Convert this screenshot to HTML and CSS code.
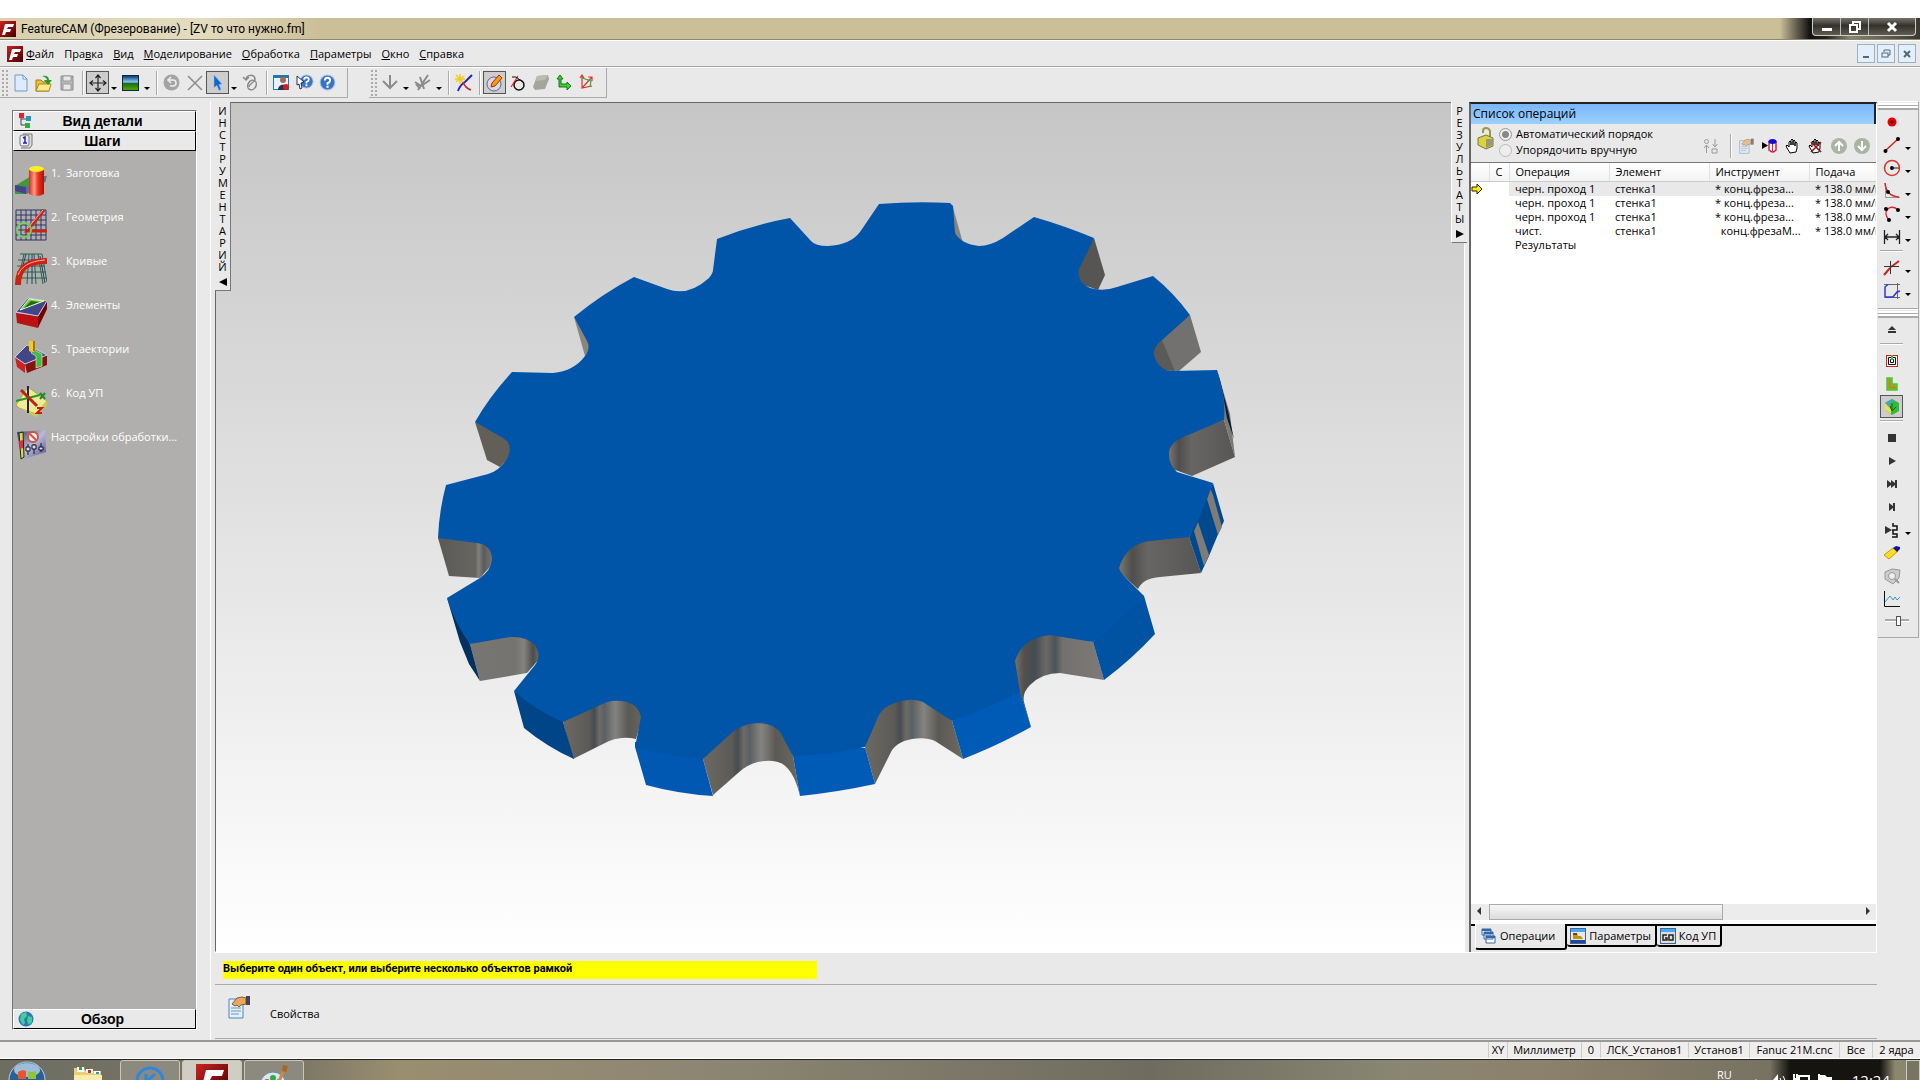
FILE: index.html
```html
<!DOCTYPE html>
<html lang="ru">
<head>
    <meta charset="UTF-8">
    <title>FeatureCAM (Фрезерование) - [ZV то что нужно.fm]</title>
    <link rel="stylesheet" href="styles.css">
</head>
<body>
    <!-- shared icons -->
    <svg class="defs" width="0" height="0">
        <defs>
            <linearGradient id="redBox" x1="0" y1="0" x2="1" y2="1"><stop offset="0" stop-color="#c22"/><stop offset="1" stop-color="#400"/></linearGradient>
            <linearGradient id="cyl"><stop offset="0" stop-color="#c31"/><stop offset=".35" stop-color="#f98"/><stop offset=".6" stop-color="#e32"/><stop offset="1" stop-color="#a10"/></linearGradient>
            <linearGradient id="sky" x1="0" y1="0" x2="0" y2="1"><stop offset="0" stop-color="#036"/><stop offset=".45" stop-color="#8cf"/><stop offset=".5" stop-color="#1a6a1a"/><stop offset="1" stop-color="#5a0"/></linearGradient>
            <linearGradient id="panel" x1="0" y1="0" x2="1" y2="1"><stop offset="0" stop-color="#336"/><stop offset=".5" stop-color="#bbd"/><stop offset="1" stop-color="#448"/></linearGradient>
            <symbol id="logo" viewBox="0 0 16 16">
                <rect width="16" height="16" fill="url(#redBox)"/>
                <path d="M5 3h9l-1 3H8l-1 2h4l-1 3H6l-1 3H2l2-7z" fill="#fff"/>
            </symbol>
            <symbol id="help" viewBox="0 0 16 16">
                <circle cx="8" cy="8" r="7" fill="#3b74c4" stroke="#a8c8ec"/>
                <path d="M5.500 6q0-2.500 2.500-2.500T10.500 6q0 1.500-2.500 2.500v1.500" fill="none" stroke="#fff" stroke-width="1.800"/>
                <rect x="7" y="11" width="2" height="2" fill="#fff"/>
            </symbol>
            <symbol id="hand" viewBox="0 0 16 16">
                <path d="M5 15 2 10 1 8l1-1 2 2V4l1-1 1 1v3-5l1-1 1 1v5-4l1-1 1 1v5-3l1-1 1 1v5l-1 4z" fill="#fff" stroke="#000"/>
            </symbol>
            <symbol id="props" viewBox="0 0 24 24">
                <path d="M1 4h14v19H1z" fill="#e4effa" stroke="#4a86c0"/>
                <path d="M3 13h10M3 16h10M3 19h8" stroke="#69b"/>
                <path d="M4 9l5-6 5-1 4 1v6l-5 1-2 2-2-2-2 1z" fill="#e8a860" stroke="#8a5a20"/>
                <path d="M18 1h4v9h-4z" fill="#445"/>
            </symbol>
        </defs>
    </svg>

    <header class="titlebar">
        <svg width="16" height="16"><use href="#logo"/></svg>
        <h1>FeatureCAM (Фрезерование) - [ZV то что нужно.fm]</h1>
        <div class="window-buttons">
            <button aria-label="Свернуть"><svg width="12" height="12"><rect x="1" y="7" width="10" height="3" fill="#fff"/></svg></button>
            <button aria-label="Восстановить"><svg width="12" height="12" fill="none" stroke="#fff" stroke-width="2"><path d="M4 3V1h7v7H9"/><rect x="1" y="4" width="7" height="7"/></svg></button>
            <button class="wide" aria-label="Закрыть"><svg width="12" height="12" stroke="#fff" stroke-width="3"><path d="M2 2l8 8M10 2l-8 8"/></svg></button>
        </div>
    </header>

    <nav class="menubar">
        <svg width="16" height="16"><use href="#logo"/></svg>
        <a href="#"><u>Ф</u>айл</a>
        <a href="#">Пра<u>в</u>ка</a>
        <a href="#"><u>В</u>ид</a>
        <a href="#"><u>М</u>оделирование</a>
        <a href="#"><u>О</u>бработка</a>
        <a href="#"><u>П</u>араметры</a>
        <a href="#"><u>О</u>кно</a>
        <a href="#"><u>С</u>правка</a>
        <div class="mdi-buttons">
            <button aria-label="Свернуть окно"><svg width="12" height="12"><rect x="3" y="8" width="6" height="2" fill="#567"/></svg></button>
            <button aria-label="Восстановить окно"><svg width="12" height="12" fill="none" stroke="#567"><path d="M4 4V2h6v5H8"/><rect x="2" y="5" width="6" height="4"/></svg></button>
            <button aria-label="Закрыть окно"><svg width="12" height="12" stroke="#567" stroke-width="2"><path d="M3 3l6 6M9 3l-6 6"/></svg></button>
        </div>
    </nav>

    <div class="toolbars">
        <div class="toolbar">
            <span class="grip"></span>
            <button class="tool" aria-label="Создать"><svg width="16" height="18"><path d="M2 1h8l4 4v12H2z" fill="#dcecfc" stroke="#6a9ad0"/><path d="M10 1v4h4z" fill="#fff" stroke="#6a9ad0"/></svg></button>
            <button class="tool" aria-label="Открыть"><svg width="18" height="18"><path d="M1 6h5l2 2h6v9H1z" fill="#e8c040" stroke="#a07810"/><path d="M1 17l3-7h12l-2 7z" fill="#fce98c" stroke="#b08a20"/><path d="M7 2c5-1 7 1 7 4h3l-4 5-4-5h3c0-2-2-3-5-4z" fill="#2a9a2a"/></svg></button>
            <button class="tool" aria-label="Сохранить"><svg width="16" height="18"><path d="M2 2h12v14H2z" fill="#b8b8b8" stroke="#8c8c8c"/><path d="M4 2h8v5H4zM4 10h8v6H4z" fill="#e8e8e8" stroke="#999"/></svg></button>
            <span class="sep"></span>
            <button class="tool pressed" aria-label="Панорама"><svg width="18" height="18" fill="none" stroke="#222"><path d="M9 1v16M1 9h16M6.500 4L9 1l2.500 3M6.500 14L9 17l2.500-3M4 6.500L1 9l3 2.500M14 6.500L17 9l-3 2.500" stroke-width="1.200"/></svg></button>
            <button class="drop" aria-label="Меню вида"></button>
            <button class="tool" aria-label="Закраска"><svg width="17" height="16"><rect x=".5" y=".5" width="16" height="15" fill="url(#sky)" stroke="#124"/></svg></button>
            <button class="drop" aria-label="Меню закраски"></button>
            <span class="sep"></span>
            <button class="tool" aria-label="Отмена"><svg width="17" height="17"><circle cx="8.500" cy="8.500" r="8" fill="#a4a4a4"/><path d="M6 6h4a3 3 0 0 1 0 6H7M8 3L5 6l3 3" fill="none" stroke="#eee" stroke-width="1.500"/></svg></button>
            <button class="tool" aria-label="Удалить"><svg width="16" height="16" stroke="#8c8c8c" stroke-width="1.500"><path d="M1 1l14 14M15 1L1 15"/></svg></button>
            <button class="tool pressed" aria-label="Выбор"><svg width="14" height="17"><path d="M3 1l8 9-3 .5 2 5-2 1-2-5-3 2z" fill="#16c" stroke="#8bf" stroke-width=".6"/></svg></button>
            <button class="drop" aria-label="Меню выбора"></button>
            <button class="tool" aria-label="Спираль"><svg width="18" height="18" fill="none" stroke="#888" stroke-width="1.500"><path d="M1 3l3 3 3-3M4 6C4 0 13 0 13 5c0 4-6 4-6 8"/><ellipse cx="10" cy="11" rx="4" ry="5" transform="rotate(30 10 11)"/></svg></button>
            <span class="sep"></span>
            <button class="tool" aria-label="Помощник"><svg width="17" height="17"><rect x=".5" y="1.500" width="15" height="14" fill="#e8f2fc" stroke="#27b"/><rect x="1" y="1" width="15" height="3" fill="#27a"/><circle cx="10" cy="6" r="3" fill="#a65"/><path d="M5 16c0-7 10-7 10 0z" fill="#235"/><circle cx="13" cy="13" r="3" fill="#c22"/></svg></button>
            <button class="tool" aria-label="Что это"><svg width="18" height="17"><use href="#help" x="3" y="0" width="15" height="15"/><path d="M1 2l7 6-3 1 1 5-2 1-1-5-2 1z" fill="#fff" stroke="#235"/></svg></button>
            <button class="tool" aria-label="Справка"><svg width="17" height="17"><use href="#help"/></svg></button>
        </div>
        <div class="toolbar">
            <span class="grip"></span>
            <button class="tool" aria-label="Ось"><svg width="18" height="16" fill="none" stroke="#8c8c8c" stroke-width="2"><path d="M9 0v13M2 6l7 7 7-7"/></svg></button>
            <button class="drop" aria-label="Меню осей"></button>
            <button class="tool" aria-label="Плоскость"><svg width="18" height="17" fill="none" stroke="#8c8c8c" stroke-width="2"><path d="M14 1L4 16M6 3l4 12M1 8l6 4 9-6M2 10l4 5"/></svg></button>
            <button class="drop" aria-label="Меню плоскостей"></button>
            <span class="sep"></span>
            <button class="tool" aria-label="Мастер кривой"><svg width="18" height="18" fill="none"><path d="M1 1l8 8M1 8l8-6M5 0v10M0 5h10" stroke="#ec2" stroke-width="1.500"/><path d="M17 1L10 8Q5 11 3 17" stroke="#22c" stroke-width="2"/><path d="M8 8q2 6 8 8" stroke="#c22" stroke-width="1.500"/></svg></button>
            <span class="sep"></span>
            <button class="tool pressed" aria-label="Элемент"><svg width="18" height="18"><circle cx="8" cy="10" r="7" fill="#d8d8e8" stroke="#668"/><path d="M5 13l1-4 7-8 3 3-7 8z" fill="#f90" stroke="#932"/></svg></button>
            <button class="tool" aria-label="Окружность"><svg width="16" height="18" fill="none"><circle cx="9" cy="11" r="5" stroke="#111" stroke-width="1.500"/><path d="M1 13L8 2" stroke="#e22" stroke-width="1.200"/><path d="M2 3h4l7 5" stroke="#111"/></svg></button>
            <button class="tool" aria-label="Тело"><svg width="18" height="18"><path d="M5 2l11-1 1 4-4 10-10 1-2-3z" fill="#a3a69c"/><path d="M5 2l11-1-3 5-9 1z" fill="#b9bcb2"/></svg></button>
            <button class="tool" aria-label="Переместить"><svg width="16" height="17"><path d="M4 1l3 4H5v5h6V8l4 4-4 4v-3H3V5H1z" fill="#4c3" stroke="#171"/></svg></button>
            <button class="tool" aria-label="Оси XYZ"><svg width="16" height="17" fill="none" stroke="#d33" stroke-width="1.200"><path d="M3 2v12l10-2M1 4l2-3 2 3M3 14L13 3M9 3h4v4"/><path d="M3 4l9 3-1 6" stroke="#3a3"/></svg></button>
        </div>
    </div>

    <main class="workspace">
        <aside class="steps">
            <div class="steps-box">
                <button class="steps-head">
                    <svg width="16" height="16"><path d="M3 4v8h5M3 6h6" fill="none" stroke="#444"/><rect x="1" y="0" width="5" height="5" fill="#d23"/><rect x="8" y="3" width="5" height="5" fill="#29b"/><rect x="7" y="10" width="5" height="5" fill="#3a4"/></svg>
                    <span>Вид детали</span>
                </button>
                <button class="steps-head">
                    <svg width="16" height="16"><path d="M5 1h9v11l-2 3H3" fill="#ddd" stroke="#777"/><rect x="2" y="2" width="9" height="11" rx="2" fill="#eef" stroke="#777"/><path d="M5 5l2-1v6M5 10h4" fill="none" stroke="#22c" stroke-width="1.500"/></svg>
                    <span>Шаги</span>
                </button>
                <ul class="step-list">
                    <li><a href="#">
                        <svg width="32" height="32"><path d="M0 21l16-10h16l-2 6-18 12H0z" fill="#3c9a3c"/><path d="M0 20l11 2v7L0 26z" fill="#448"/><path d="M11 22l20-11v5L11 29z" fill="#66a"/><path d="M14 4h15v25q-7 4-15 0z" fill="url(#cyl)"/><ellipse cx="21.500" cy="4" rx="7.500" ry="3" fill="#fe2"/></svg>
                        <span>1.&nbsp; Заготовка</span></a></li>
                    <li><a href="#">
                        <svg width="32" height="32" fill="none"><path d="M1 1h30v30H1zM6 1v30M11 1v30M16 1v30M21 1v30M26 1v30M1 6h30M1 11h30M1 16h30M1 21h30M1 26h30" stroke="#336"/><path d="M29 1L12 22h20" stroke="#c21" stroke-width="3"/><path d="M28 1L12 20" stroke="#faa"/><circle cx="9" cy="21" r="7" stroke="#7c6" stroke-width="2"/></svg>
                        <span>2.&nbsp; Геометрия</span></a></li>
                    <li><a href="#">
                        <svg width="32" height="32" fill="none"><path d="M5 1h22M3 7h26M2 13h28M2 19h29M1 25h31M9 1L3 28M14 1l-2 30M19 1l2 30M23 1l5 30M27 1l5 28" stroke="#264"/><path d="M11 1L6 20M17 1v30M25 3l5 27" stroke="#338"/><path d="M3 32C3 15 12 8 32 8" stroke="#c21" stroke-width="6"/><path d="M3 22C6 14 14 8 30 7" stroke="#faa"/></svg>
                        <span>3.&nbsp; Кривые</span></a></li>
                    <li><a href="#">
                        <svg width="32" height="32"><path d="M1 16l22 3v12L2 26z" fill="#b11"/><path d="M23 19l9-16v9l-9 19z" fill="#700"/><path d="M1 15L13 1l19 3-9 15z" fill="#448" stroke="#ccd"/><path d="M5 13l9-11 15 2z" fill="#7c3" stroke="#dfc"/><path d="M9 11l7-7 8 1z" fill="#262"/></svg>
                        <span>4.&nbsp; Элементы</span></a></li>
                    <li><a href="#">
                        <svg width="32" height="32"><path d="M0 16l10 7v9L2 26z" fill="#c22"/><path d="M10 23l22-9v10l-20 8z" fill="#811"/><path d="M0 16L12 4l20 10-22 9z" fill="#448" stroke="#ccd"/><path d="M19 9l8 4v12l-6 2V15l-5-3z" fill="#4b4" stroke="#dfd" stroke-width=".6"/><path d="M14 0h6v10q-3 2-6 0z" fill="#ec2"/><path d="M18 0h2v10h-2z" fill="#a70"/></svg>
                        <span>5.&nbsp; Траектории</span></a></li>
                    <li><a href="#">
                        <svg width="32" height="32" fill="none"><path d="M1 20L13 2l19 14-11 13L4 23z" fill="#f3eb94" stroke="#aa4"/><path d="M4 23l17 6 11-13v4L21 32z" fill="#cc5"/><path d="M13 1v27" stroke="#225" stroke-width="2"/><path d="M1 16l24-6" stroke="#292" stroke-width="2"/><path d="M6 5l16 16" stroke="#b21" stroke-width="3"/><path d="M25 8l5 6M30 8l-5 6" stroke="#283" stroke-width="2"/><path d="M22 23h5l-5 5h5" stroke="#b21" stroke-width="2"/></svg>
                        <span>6.&nbsp; Код УП</span></a></li>
                    <li><a href="#">
                        <svg width="32" height="32" fill="none"><path d="M2 3l28-2 1 22L6 31z" fill="url(#panel)"/><path d="M4 4l4-1 1 25-3 2z" fill="#dd3" stroke="#222"/><path d="M4 12l4-1v8l-3 1z" fill="#d33"/><circle cx="18" cy="8" r="5" fill="#eee" stroke="#c54" stroke-width="2"/><path d="M15 5l6 6" stroke="#c54" stroke-width="2"/><path d="M13 15v11M19 15v10M26 14v9" stroke="#112"/><path d="M11 18h4v4h-4zM17 16h4v4h-4zM24 18h4v3h-4z" fill="#dde" stroke="#112"/></svg>
                        <span>Настройки обработки...</span></a></li>
                </ul>
                <button class="steps-head last">
                    <svg width="16" height="16"><circle cx="8" cy="8" r="7.500" fill="#2a7ab8"/><path d="M3 3l5-2 1 4-3 3 1 4-2 2-3-5zM10 5l4 1v5l-3 3-2-4z" fill="#4c9"/></svg>
                    <span>Обзор</span>
                </button>
            </div>
        </aside>

        <div class="center">
            <div class="upper">
                <section class="viewport">
                    <svg class="part">
                        <defs>
                            <linearGradient id="g1"><stop offset="0" stop-color="#5a5954"/><stop offset=".5" stop-color="#646360"/><stop offset=".62" stop-color="#64645f"/><stop offset=".68" stop-color="#82807c"/><stop offset=".76" stop-color="#5a5c5c"/><stop offset="1" stop-color="#8b857c"/></linearGradient>
                            <linearGradient id="g2"><stop offset="0" stop-color="#777672"/><stop offset=".6" stop-color="#747370"/><stop offset=".72" stop-color="#83827e"/><stop offset=".84" stop-color="#4c4d4c"/><stop offset="1" stop-color="#8b867d"/></linearGradient>
                            <linearGradient id="g3"><stop offset="0" stop-color="#6c6963"/><stop offset=".3" stop-color="#5b5a57"/><stop offset=".36" stop-color="#464c51"/><stop offset=".42" stop-color="#6d6b67"/><stop offset=".48" stop-color="#596065"/><stop offset=".6" stop-color="#85837f"/><stop offset=".75" stop-color="#5a5955"/><stop offset="1" stop-color="#6e695e"/></linearGradient>
                            <linearGradient id="g4"><stop offset="0" stop-color="#827c74"/><stop offset=".13" stop-color="#53504c"/><stop offset=".25" stop-color="#444d52"/><stop offset=".37" stop-color="#6b6966"/><stop offset=".47" stop-color="#4a5459"/><stop offset=".55" stop-color="#73716d"/><stop offset="1" stop-color="#7d7a77"/></linearGradient>
                            <linearGradient id="g5"><stop offset="0" stop-color="#8a837a"/><stop offset=".2" stop-color="#4f4e4c"/><stop offset=".38" stop-color="#686664"/><stop offset="1" stop-color="#565655"/></linearGradient>
                        </defs>
                        <g transform="translate(-216 -103)">
                        <!-- notch walls, they run a little under the top face -->
                        <path d="M574 317l18 31-7 8z" fill="#8a867c"/>
                        <path d="M475 422l28 10 12 13v7l-15 15-13-7z" fill="#625f58"/>
                        <path d="M438 538H477L498 548 496 560 480 578 449 576z" fill="url(#g1)"/>
                        <path d="M470 644L510 630 545 640 541 657 527 673 480 681z" fill="url(#g2)"/>
                        <path d="M563 722L600 690H650L636 739q-17-4-33 5l-30 15z" fill="url(#g3)"/>
                        <path d="M703 759L725 725 755 715 782 722 793 756l7 40q-8-34-27-35-20-2-35 12l-25 22z" fill="url(#g3)"/>
                        <path d="M865 747L872 708 890 692 927 692 952 721l11 38-28-18q-9-4-23-2-17 3-22 15l-15 30z" fill="url(#g3)"/>
                        <path d="M1012 661L1018 645 1035 630H1050L1093 642l11 38-44-7q-18 0-30 12-8 8-6 17l7 25-11-34z" fill="url(#g4)"/>
                        <path d="M1115 568L1125 548 1150 535 1189 537l12 36-41 4q-17 1-22 12z" fill="url(#g5)"/>
                        <path d="M1165 455L1175 438 1224 420l11 37-43 19-22-8z" fill="url(#g5)"/>
                        <path d="M1150 350L1160 335 1190 315l11 37-22 19-18-1z" fill="#72716f"/>
                        <path d="M1150 350L1161 338l14 33-14-1z" fill="#5c5a57"/>
                        <path d="M1094 238l11 37-7 15-23-8v-14z" fill="#565553"/>
                        <path d="M952 204l11 39-9-3z" fill="#87847e"/>
                        <!-- outer faces -->
                        <path d="M1217 370l13 44 5 43-11-37z" fill="#7c7972"/>
                        <path d="M1217 370l11 41 6 28-7-21-4-23z" fill="#031c33"/>
                        <path d="M1213 483l11 38-5 11-10 24-8 17-12-36z" fill="#00498f"/>
                        <path d="M1210 488l3 7 9 32-4 8-11-36zM1198 522l11 33-5 11-10-35z" fill="#7f7b77"/>
                        <path d="M447 598l13 23 10 23 10 37-11-17-9-22z" fill="#00315f"/>
                        <path d="M514 691L563 715V722l11 37q-27-12-50-31z" fill="#004587"/>
                        <path d="M635 747V742H703V759l10 37q-34-2-67-11z" fill="#0058b2"/>
                        <path d="M793 756V748H865V747l10 37q-37 8-75 12z" fill="#005bb7"/>
                        <path d="M952 721L1016 680 1020 692l11 35q-32 18-68 32z" fill="#005bb7"/>
                        <path d="M1093 642L1135 592 1144 596l11 38q-23 25-51 46z" fill="#0052a3"/>
                        <!-- top face -->
                        <path fill="#0055a8" d="M446 485L488 474Q499 471 507 459Q512 450 508 442L503 438L475 422Q489 397 512 372L553 373Q574 371 585 356Q591 348 587 341L574 317Q602 294 634 277L667 289Q688 297 709 278Q713 273 713 270L717 239Q752 225 790 218L811 241Q815 246 828 246Q850 245 860 232L879 204Q915 201 950 203L953 206L955 233Q961 244 979 246Q990 246 1003 238L1034 217Q1065 226 1094 238L1079 269Q1076 282 1090 288Q1103 292 1117 287L1153 276Q1174 293 1190 315L1161 341Q1151 349 1155 358Q1160 371 1173 371L1217 370Q1226 396 1224 420L1183 437Q1168 444 1169 455Q1169 465 1177 472L1213 483Q1203 512 1189 537L1150 541Q1126 544 1119 568Q1120 572 1125 577L1144 596Q1121 621 1093 642L1050 635Q1022 638 1015 661L1020 692Q988 708 952 721L923 702Q908 696 888 706Q881 710 878 717L865 747Q830 755 793 756L780 732Q773 723 757 723Q739 724 727 737L703 759Q669 756 635 747L641 717Q638 703 622 701Q614 700 607 702L563 722Q535 710 514 691L535 665Q542 656 535 645Q526 636 510 637L470 644Q455 624 447 598L480 578Q491 570 492 560Q492 545 477 543L438 538Q439 511 446 485Z"/>
                        </g>
                    </svg>
                    <button class="side-tab tab-left">
                        <span>ИНСТРУМЕНТАРИЙ</span>
                        <svg width="8" height="8"><path d="M8 0v8L0 4z"/></svg>
                    </button>
                    <button class="side-tab tab-right">
                        <span>РЕЗУЛЬТАТЫ</span>
                        <svg width="8" height="8"><path d="M0 0v8l8-4z"/></svg>
                    </button>
                </section>

                <section class="results">
                    <h2>Список операций</h2>
                    <div class="order">
                        <svg width="18" height="24"><path d="M7 7V5q0-3 3-3t4 3v8" fill="none" stroke="#994" stroke-width="2"/><path d="M2 12l8-3 7 3v8l-7 3-8-4z" fill="#dcd23a" stroke="#774"/><path d="M10 13v9l7-3v-6z" fill="#997"/></svg>
                        <div class="order-radios">
                            <label><input type="radio" name="order" checked> Автоматический порядок</label>
                            <label><input type="radio" name="order"> Упорядочить вручную</label>
                        </div>
                        <div class="order-tools">
                            <button aria-label="Сортировка"><svg width="16" height="16" fill="none" stroke="#999"><circle cx="3.500" cy="3.500" r="2"/><path d="M3.500 15V8M1 10l2.500-3L6 10M12 1v7M9.500 6l2.500 3 2.500-3M9 11h5v4H9z"/></svg></button>
                            <span class="sep"></span>
                            <button aria-label="Свойства операции"><svg width="16" height="16" opacity=".65"><use href="#props"/></svg></button>
                            <button aria-label="Инструмент"><svg width="16" height="16"><path d="M0 4v7l6-3.500z"/><path d="M7 3v9q4 4 7 0V3" fill="#fff" stroke="#d24" stroke-width="1.500"/><path d="M10.500 5v9" stroke="#d24"/><ellipse cx="10.500" cy="3.500" rx="4" ry="2.500" fill="#11c"/></svg></button>
                            <button aria-label="Стоп"><svg width="16" height="16"><use href="#hand"/></svg></button>
                            <button aria-label="Убрать стоп"><svg width="16" height="16"><use href="#hand"/><path d="M3 4l10 10M13 4L3 14" stroke="#911" stroke-width="1.500"/></svg></button>
                            <button aria-label="Вверх"><svg width="16" height="16"><circle cx="8" cy="8" r="8" fill="#a9b4a1"/><path d="M8 13V4M4 8l4-4 4 4" fill="none" stroke="#fff" stroke-width="2"/></svg></button>
                            <button aria-label="Вниз"><svg width="16" height="16"><circle cx="8" cy="8" r="8" fill="#a9b4a1"/><path d="M8 3v9M4 8l4 4 4-4" fill="none" stroke="#fff" stroke-width="2"/></svg></button>
                        </div>
                    </div>
                    <div class="table-wrap">
                        <table>
                            <colgroup><col class="c-mark"><col class="c-c"><col class="c-text"><col class="c-text"><col class="c-text"><col></colgroup>
                            <thead>
                                <tr><th></th><th>С</th><th>Операция</th><th>Элемент</th><th>Инструмент</th><th>Подача</th></tr>
                            </thead>
                            <tbody>
                                <tr class="current"><td><svg width="12" height="12"><path d="M1 4h5V1l5 5-5 5V8H1z" fill="#fe0" stroke="#220"/></svg></td><td></td><td>черн. проход 1</td><td>стенка1</td><td>* конц.фреза...</td><td>* 138.0 мм/мин</td></tr>
                                <tr><td></td><td></td><td>черн. проход 1</td><td>стенка1</td><td>* конц.фреза...</td><td>* 138.0 мм/мин</td></tr>
                                <tr><td></td><td></td><td>черн. проход 1</td><td>стенка1</td><td>* конц.фреза...</td><td>* 138.0 мм/мин</td></tr>
                                <tr><td></td><td></td><td>чист.</td><td>стенка1</td><td>&nbsp; конц.фрезаМ...</td><td>* 138.0 мм/мин</td></tr>
                                <tr><td></td><td></td><td>Результаты</td><td></td><td></td><td></td></tr>
                            </tbody>
                        </table>
                    </div>
                    <div class="scrollbar">
                        <svg width="18" height="14"><path d="M10 3v8L6 7z" fill="#333"/></svg>
                        <div class="thumb"></div>
                        <svg width="18" height="14"><path d="M8 3v8l4-4z" fill="#333"/></svg>
                    </div>
                    <div class="tabs">
                        <button class="active"><svg width="16" height="16" fill="#fff" stroke="#36a"><path d="M1 1h9v6H1zM3 4h9v7H3zM5 8h9v7H5z"/><path d="M1 2h9M3 5h9M5 9h9" stroke-width="2"/></svg>Операции</button>
                        <button><svg width="16" height="16"><rect x=".5" y=".5" width="15" height="15" fill="#e8e8e8" stroke="#468"/><path d="M1 1h14v3H1z" fill="#4af"/><path d="M3 5h4l1 3h3l2 3H3z" fill="#b90"/><path d="M3 5h4v2H3z" fill="#a22"/><path d="M1 12h14v3H1z" fill="#24a"/></svg>Параметры</button>
                        <button><svg width="16" height="16" fill="none"><rect x=".5" y=".5" width="15" height="15" fill="#ddd" stroke="#468"/><path d="M1 1h14v3H1z" fill="#4af"/><path d="M7 7H3v5h4v-2H5M9 7h4v5H9z" stroke="#222" stroke-width="1.500"/></svg>Код УП</button>
                    </div>
                </section>
            </div>

            <div class="prompt"><p>Выберите один объект, или выберите несколько объектов рамкой</p></div>
            <div class="properties">
                <svg width="24" height="24"><use href="#props"/></svg>
                <span>Свойства</span>
            </div>
        </div>

        <aside class="right-tools">
            <div class="vbar">
                <span class="hgrip"></span>
                <div class="vrow"><button class="tool" aria-label="Точка"><svg width="18" height="18"><circle cx="9" cy="9" r="4.500" fill="#e00"/><path d="M9 7v4M7 9h4" stroke="#400"/></svg></button></div>
                <div class="vrow"><button class="tool" aria-label="Линия"><svg width="18" height="18"><path d="M2 15L15 3" stroke="#d22" stroke-width="1.500"/><circle cx="2.500" cy="15" r="2"/><circle cx="15" cy="3" r="2"/></svg></button><button class="drop" aria-label="Меню линий"></button></div>
                <div class="vrow"><button class="tool" aria-label="Круг"><svg width="18" height="18"><circle cx="9" cy="9" r="7.500" fill="none" stroke="#d33" stroke-width="1.500"/><circle cx="9" cy="9" r="2"/><path d="M9 9h7" stroke="#222"/></svg></button><button class="drop" aria-label="Меню кругов"></button></div>
                <div class="vrow"><button class="tool" aria-label="Скругление"><svg width="18" height="18" fill="none"><path d="M2.500 1v14.500H17" stroke="#999"/><path d="M2 1q1 13 14 14" stroke="#d22" stroke-width="1.500"/><circle cx="5" cy="10" r="2" fill="#000"/></svg></button><button class="drop" aria-label="Меню скруглений"></button></div>
                <div class="vrow"><button class="tool" aria-label="Дуга"><svg width="18" height="18"><path d="M6 15C-2 6 8-2 15 5" fill="none" stroke="#d22" stroke-width="1.500"/><circle cx="6" cy="15" r="2"/><circle cx="3" cy="4" r="2"/><circle cx="15" cy="5" r="2"/></svg></button><button class="drop" aria-label="Меню дуг"></button></div>
                <div class="vrow"><button class="tool" aria-label="Размер"><svg width="18" height="18" fill="none" stroke="#222"><path d="M1.500 2v14M16.500 2v14M2 9h14M5 6L2 9l3 3M13 6l3 3-3 3" stroke-width="1.300"/></svg></button><button class="drop" aria-label="Меню размеров"></button></div>
                <span class="hsep"></span>
                <div class="vrow"><button class="tool" aria-label="Обрезка"><svg width="18" height="18" fill="none"><path d="M1 16L7 9M8 8l8-6" stroke="#c22" stroke-width="2"/><path d="M7.500 2v13M1 7.500h15" stroke="#333"/></svg></button><button class="drop" aria-label="Меню обрезки"></button></div>
                <div class="vrow"><button class="tool" aria-label="Кривая"><svg width="18" height="18" fill="none"><path d="M1 2.500h16M14.500 1v16M2 15.500h15" stroke="#666"/><path d="M5 2.500L2 5v10h8l4-5 3-1" stroke="#33d" stroke-width="1.500"/></svg></button><button class="drop" aria-label="Меню кривых"></button></div>
            </div>
            <div class="vbar">
                <span class="hgrip"></span>
                <div class="vrow"><button class="tool" aria-label="Извлечь"><svg width="18" height="18"><path d="M9 5l4 4H5zM5 10h8v2H5z" fill="#333"/></svg></button></div>
                <span class="hsep"></span>
                <div class="vrow"><button class="tool" aria-label="Центры"><svg width="18" height="18" fill="none"><rect x="3.500" y="3.500" width="11" height="11" fill="#fff" stroke="#c22"/><path d="M5.500 5.500h7v7h-7zM7.500 7.500h3v3h-3z" stroke="#111"/><path d="M9 3v5" stroke="#3c3" stroke-width="2"/></svg></button></div>
                <div class="vrow"><button class="tool" aria-label="2D"><svg width="18" height="18"><path d="M4 3h5v6h5v6H4z" fill="#9a2" stroke="#4c3" stroke-width="1.500"/><path d="M6.500 5v7.500H13" fill="none" stroke="#c72"/></svg></button></div>
                <div class="vrow"><button class="tool pressed" aria-label="3D"><svg width="18" height="18"><path d="M2 5l7-4 7 4v8l-7 4-7-5z" fill="#3b3"/><path d="M2 5l7-4 3 2-5 4v4z" fill="#4aa"/><path d="M2 5l6 6v5l-6-4z" fill="#ed5"/><path d="M9 5v7M7 8l2 5 4-4" stroke="#161" fill="none"/></svg></button></div>
                <span class="hsep"></span>
                <div class="vrow"><button class="tool" aria-label="Остановить"><svg width="18" height="18"><rect x="5" y="5" width="8" height="8" fill="#333"/></svg></button></div>
                <div class="vrow"><button class="tool" aria-label="Пуск"><svg width="18" height="18"><path d="M6 5v8l7-4z" fill="#333"/></svg></button></div>
                <div class="vrow"><button class="tool" aria-label="Вперед"><svg width="18" height="18"><path d="M4 5v8l4-3v3l4-3v3h2V5h-2v3L8 5v3z" fill="#333"/></svg></button></div>
                <div class="vrow"><button class="tool" aria-label="Шаг"><svg width="18" height="18"><path d="M6 5v8l4-3v3h2V5h-2v3z" fill="#333"/></svg></button></div>
                <div class="vrow"><button class="tool" aria-label="К операции"><svg width="18" height="18"><path d="M2 5v8l7-4z" fill="#333"/><path d="M10 2v3h4v4h-4v4h4v3h-5M9 9h3" fill="none" stroke="#111" stroke-width="1.500"/></svg></button><button class="drop" aria-label="Меню шага"></button></div>
                <div class="vrow"><button class="tool" aria-label="Очистить"><svg width="18" height="18"><path d="M1 11l9-7 5 3-9 8z" fill="#fd2" stroke="#c90"/><path d="M10 4l3-2 4 1v2l-3 3z" fill="#11a"/></svg></button></div>
                <div class="vrow"><button class="tool" aria-label="Показать тело"><svg width="18" height="18" fill="#ccc" stroke="#999"><path d="M2 5l7-3 8 1-1 8-6 6-8-5z"/><circle cx="9" cy="9" r="3.500" fill="#eee"/><path d="M12 12l4 4" stroke-width="2"/></svg></button></div>
                <div class="vrow"><button class="tool" aria-label="График"><svg width="18" height="18" fill="none"><path d="M1.500 1v15.500H17" stroke="#111"/><path d="M2 12l5-6 3 4 2-3 2 3 3-3" stroke="#39c"/></svg></button></div>
                <input class="speed" type="range" min="0" max="100" value="60" aria-label="Скорость">
            </div>
        </aside>
    </main>

    <footer class="statusbar">
        <span class="s-xy">XY</span>
        <span class="s-unit">Миллиметр</span>
        <span class="s-num">0</span>
        <span class="s-ucs">ЛСК_Установ1</span>
        <span class="s-setup">Установ1</span>
        <span class="s-post">Fanuc 21M.cnc</span>
        <span class="s-all">Все</span>
        <span class="s-cores">2 ядра</span>
    </footer>

    <div class="taskbar">
        <button class="start" aria-label="Пуск Windows"><svg width="40" height="36"><circle cx="20" cy="20" r="18" fill="#2c5f92" stroke="#b9cfe2"/><ellipse cx="20" cy="10" rx="13" ry="7" fill="#9dbdd8"/><path d="M11 12q4-3 8-1v8h-8z" fill="#e8552a"/><path d="M21 11q4 2 8 0v8h-8z" fill="#8cc63c"/></svg></button>
        <button class="task" aria-label="Проводник"><svg width="32" height="32"><path d="M2 5h10l2 3h15v24H2z" fill="#e8cf78"/><path d="M5 4h7v5H5zM14 6h7v4h-7zM22 8h6v3h-6z" fill="#fff"/><path d="M7 4h3v3H7z" fill="#3a3"/><path d="M16 7h3v3h-3z" fill="#c33"/><path d="M24 9h3v2h-3z" fill="#39c"/><path d="M2 12h28v20H2z" fill="#f8ecac"/></svg></button>
        <button class="task open" aria-label="Компас"><svg width="32" height="32" fill="none" stroke="#2f86dc"><circle cx="16" cy="17" r="13" stroke-width="3"/><path d="M12 10v14M21 10l-8 7 8 7" stroke-width="3"/></svg></button>
        <button class="task open current-task" aria-label="FeatureCAM"><svg width="32" height="32"><use href="#logo"/></svg></button>
        <button class="task open" aria-label="Paint"><svg width="32" height="32"><ellipse cx="15" cy="21" rx="13" ry="13" fill="#d8e8f2" stroke="#789"/><circle cx="9" cy="18" r="3" fill="#d44"/><circle cx="15" cy="14" r="3" fill="#3a4"/><circle cx="21" cy="18" r="3" fill="#38c"/><path d="M20 20l6-15" stroke="#c84" stroke-width="3"/><path d="M24 7l1-6 5 1-2 6z" fill="#a62"/></svg></button>
        <div class="tray">
            <span class="lang">RU</span>
            <svg width="12" height="10"><path d="M6 2l5 6H1z" fill="#fff"/></svg>
            <svg width="18" height="18" fill="#fff"><path d="M1 7h4l5-6v16l-5-5H1z"/><path d="M12 5q3 4 0 8M15 3q4 6 0 12" fill="none" stroke="#fff"/></svg>
            <svg width="18" height="18" fill="none" stroke="#fff" stroke-width="2"><path d="M2 1v5h3V1M4 6v5M7 3h10v9H7z"/><path d="M9 8l5 5" stroke="#d22"/></svg>
            <svg width="18" height="18"><path d="M3 1v16" stroke="#fff" stroke-width="2"/><path d="M4 2h5l2 2h5v8h-5l-2-2H4z" fill="#fff"/><circle cx="12" cy="11" r="4" fill="#d22"/></svg>
            <time>12:24</time>
        </div>
        <button class="show-desktop" aria-label="Показать рабочий стол"></button>
    </div>
</body>
</html>
```
FILE: styles.css
```css
* {
    box-sizing: border-box;
}
body {
    margin: 0;
    padding-top: 18px;
    height: 100vh;
    display: flex;
    flex-direction: column;
    overflow: hidden;
    background: #fff;
    color: #000;
    font-family: "Open Sans", "Noto Sans", sans-serif;
    font-size: 11px;
    line-height: 14px;
}
button {
    margin: 0;
    padding: 0;
    border: none;
    background: none;
    font: inherit;
    color: inherit;
}
svg {
    display: block;
    flex: none;
}
.defs {
    position: absolute;
}
h1, h2, p, ul {
    margin: 0;
    padding: 0;
    font-weight: normal;
}

/* title bar */
.titlebar {
    flex: none;
    display: flex;
    align-items: center;
    height: 22px;
    padding-right: 4px;
    background: linear-gradient(90deg, #d8cfae 0, #e4dcc0 200px, #cbbf98 320px, #cbbf98 1780px, #111 1810px, #222 1826px, #8a8472 1850px, #3a382f 1920px);
    border-bottom: 1px solid #8c866c;
}
.titlebar h1 {
    flex: 1;
    margin-left: 5px;
    font-family: Roboto, sans-serif;
    font-size: 12px;
    line-height: 16px;
}
.window-buttons {
    display: flex;
    align-self: flex-start;
    border: 1px solid #ccc;
    border-top: none;
    border-radius: 0 0 4px 4px;
    background: linear-gradient(#77736a, #33312c 45%, #605c50);
}
.window-buttons button {
    width: 28px;
    height: 17px;
    display: flex;
    align-items: center;
    justify-content: center;
    border-right: 1px solid #bbb;
}
.window-buttons .wide {
    width: 46px;
    border-right: none;
}

/* menu */
.menubar {
    flex: none;
    display: flex;
    align-items: center;
    gap: 10px;
    height: 27px;
    padding: 0 4px 0 7px;
    background: #e9e9e9;
    border-top: 1px solid #fff;
    border-bottom: 1px solid #a9a9a9;
}
.menubar > svg {
    margin-right: -7px;
}
.menubar a {
    color: #000;
    text-decoration: none;
}
.mdi-buttons {
    display: flex;
    gap: 2px;
    margin-left: auto;
}
.mdi-buttons button {
    width: 18px;
    height: 19px;
    display: flex;
    align-items: center;
    justify-content: center;
    border: 1px solid #9ab0c4;
    background: #e3f0fb;
}
.mdi-buttons button:last-child {
    margin-left: 1px;
}

/* toolbars */
.toolbars {
    flex: none;
    display: flex;
    gap: 21px;
    height: 34px;
    padding-bottom: 3px;
    background: #e9e9e9;
    border-top: 1px solid #fff;
}
.toolbar {
    display: flex;
    align-items: center;
    padding-right: 8px;
    border-right: 1px solid #aaa;
    border-bottom: 1px solid #aaa;
}
.grip {
    width: 9px;
    height: 26px;
    background: radial-gradient(circle at 1px 1px, #aaa 1px, transparent 1px) 2px 0 / 4px 4px;
}
.tool {
    width: 23px;
    height: 23px;
    display: flex;
    align-items: center;
    justify-content: center;
}
.tool.pressed {
    border: 1px solid #555;
    background: #cdcdcd;
}
.drop {
    width: 10px;
    height: 23px;
    display: flex;
    align-items: flex-end;
    justify-content: center;
}
.drop::after {
    content: "";
    margin-bottom: 4px;
    border: 3px solid transparent;
    border-top-color: #000;
    border-bottom: none;
}
.sep {
    width: 8px;
    height: 24px;
    background: linear-gradient(90deg, transparent 4px, #aaa 4px, #aaa 5px, #fff 5px, #fff 6px, transparent 6px);
}

/* work area */
.workspace {
    flex: 1;
    display: flex;
    min-height: 0;
    background: #e9e9e9;
}
.steps {
    width: 211px;
    padding: 9px 13px 10px 12px;
    border-right: 1px solid #fff;
}
.steps-box {
    height: 100%;
    display: flex;
    flex-direction: column;
    background: #b0afad;
    border: 1px solid #777;
    border-right-color: #fff;
    border-bottom-color: #fff;
}
.steps-head {
    display: flex;
    align-items: center;
    height: 20px;
    padding: 0 4px;
    background: #e9e9e9;
    border: 1px solid #fff;
    border-right-color: #000;
    border-bottom-color: #000;
    font-family: "Liberation Sans", Arial, sans-serif;
    font-size: 14px;
    font-weight: bold;
}
.steps-head span {
    flex: 1;
    padding-right: 20px;
    text-align: center;
}
.step-list {
    flex: 1;
    padding: 14px 2px;
    list-style: none;
}
.step-list a {
    display: flex;
    height: 44px;
    gap: 4px;
    color: #fff;
    text-decoration: none;
    line-height: 16px;
}
.center {
    flex: 1;
    min-width: 0;
    display: flex;
    flex-direction: column;
    border-bottom: 1px solid #aaa;
    margin: 1px 0 1px 4px;
}
.upper {
    flex: 1;
    min-height: 0;
    display: flex;
    gap: 4px;
    border-bottom: 1px solid #fff;
}
.viewport {
    position: relative;
    flex: 1;
    min-width: 0;
    background: linear-gradient(#c6c6c6, #fff);
    border: 1px solid #666;
    border-right-color: #fff;
    border-bottom-color: #fff;
}
.part {
    width: 100%;
    height: 100%;
}
.side-tab {
    position: absolute;
    top: -1px;
    display: flex;
    flex-direction: column;
    align-items: center;
    gap: 5px;
    width: 16px;
    padding: 3px 3px 4px;
    background: #e9e9e9;
    border-bottom: 1px solid #777;
    line-height: 12px;
}
.side-tab span {
    width: 9px;
    word-break: break-all;
}
.tab-left {
    left: -1px;
    border-right: 1px solid #777;
}
.tab-right {
    right: -3px;
    border-left: 1px solid #fff;
}

/* operation list */
.results {
    width: 408px;
    display: flex;
    flex-direction: column;
    border: 2px solid #666;
    border-top-color: #222;
    border-right: 1px solid #fff;
    border-bottom: none;
}
.results h2 {
    height: 20px;
    padding: 0 2px;
    background: linear-gradient(#7ab6f8, #9cd0ff);
    border-right: 2px solid #222;
    font-size: 12px;
    line-height: 20px;
}
.order {
    display: flex;
    align-items: flex-start;
    height: 38px;
    padding: 2px 6px 0 5px;
    background: #e9e9e9;
}
.order-radios {
    margin-left: 3px;
}
.order-radios label {
    display: flex;
    align-items: center;
    gap: 4px;
    height: 16px;
}
.order-radios input {
    width: 13px;
    height: 13px;
    margin: 0 0 0 2px;
    appearance: none;
    border: 1px solid #bbb;
    border-radius: 50%;
    background: #eee;
}
.order-radios input:checked {
    border-color: #999;
    background: radial-gradient(#888 3px, #eee 4px);
}
.order-tools {
    display: flex;
    align-items: center;
    gap: 7px;
    height: 24px;
    margin: 8px 0 0 auto;
}
.order-tools .sep {
    margin: 0 -2px 0 0;
}
.table-wrap {
    flex: 1;
    overflow: hidden;
    background: #fff;
    border-top: 1px solid #777;
}
table {
    width: 460px;
    table-layout: fixed;
    border-collapse: collapse;
}
.c-mark {
    width: 18px;
}
.c-c {
    width: 20px;
}
.c-text {
    width: 100px;
}
th {
    height: 18px;
    padding: 0 6px;
    border-right: 1px solid #e2e2e2;
    border-bottom: 1px solid #ccc;
    background: linear-gradient(#fff, #f3f3f3);
    text-align: left;
    font-weight: normal;
}
td {
    height: 14px;
    padding: 0 6px;
    white-space: nowrap;
}
td:first-child {
    padding: 0;
}
.current td:nth-child(n+3) {
    background: #e9e9e9;
}
.scrollbar {
    display: flex;
    height: 16px;
    background: #ececec;
}
.thumb {
    width: 234px;
    margin-right: auto;
    border: 1px solid #aaa;
    background: linear-gradient(#f6f6f6, #dcdcdc);
}
.tabs {
    display: flex;
    height: 28px;
    margin-top: 4px;
    padding: 0 4px;
    border-top: 2px solid #000;
    box-shadow: 0 -4px #fff;
}
.tabs button {
    display: flex;
    align-items: center;
    gap: 3px;
    height: 21px;
    padding: 0 4px 0 3px;
    border-right: 2px solid #000;
    border-bottom: 2px solid #000;
    border-radius: 0 0 3px 3px;
}
.tabs .active {
    height: 26px;
    margin-top: -2px;
    padding: 0 10px 0 5px;
    background: #e9e9e9;
    border-left: 1px solid #fff;
}

/* prompt and properties */
.prompt {
    flex: none;
    height: 32px;
    padding: 8px 0 0 8px;
    border-bottom: 1px solid #aaa;
}
.prompt p {
    width: 594px;
    height: 18px;
    background: #ff0;
    font-family: Roboto, sans-serif;
    font-weight: bold;
    line-height: 16px;
}
.properties {
    flex: none;
    display: flex;
    gap: 18px;
    height: 53px;
    padding: 10px 13px;
}
.properties span {
    padding-top: 12px;
}

/* drawing tools */
.right-tools {
    width: 43px;
    padding: 0 1px;
}
.vbar {
    display: flex;
    flex-direction: column;
    border: 1px solid #aaa;
    border-top-color: #fff;
    border-left: none;
    padding: 1px 0 6px;
}
.hgrip {
    height: 7px;
    border-bottom: 2px solid #aaa;
    background: linear-gradient(#fff 2px, #aaa 2px, #aaa 3px, #fff 3px);
}
.vrow {
    display: flex;
    padding-left: 2px;
}
.vrow .drop::after {
    margin-bottom: 6px;
}
.hsep {
    width: 23px;
    height: 8px;
    margin-left: 2px;
    background: linear-gradient(transparent 2px, #aaa 2px, #aaa 3px, #fff 3px, #fff 4px, transparent 4px);
}
.speed {
    width: 24px;
    height: 21px;
    margin: 0 0 0 7px;
    appearance: none;
    background: linear-gradient(transparent 9px, #aaa 9px, #aaa 11px, #fff 11px, #fff 12px, transparent 12px);
}
.speed::-webkit-slider-thumb {
    appearance: none;
    width: 5px;
    height: 10px;
    border: 1px solid #555;
    background: #fff;
}

/* status bar */
.statusbar {
    flex: none;
    display: flex;
    justify-content: flex-end;
    height: 19px;
    background: #f0eded;
    border-top: 2px solid #999;
    border-bottom: 1px solid #fff;
    line-height: 16px;
    white-space: nowrap;
}
.statusbar span {
    border-left: 1px solid #ccc;
    text-align: center;
}
.s-xy {
    width: 19px;
}
.s-unit {
    width: 74px;
}
.s-num {
    width: 19px;
}
.s-ucs {
    width: 88px;
}
.s-setup {
    width: 61px;
}
.s-post {
    width: 90px;
}
.s-all {
    width: 33px;
}
.s-cores {
    width: 48px;
}

/* taskbar */
.taskbar {
    flex: none;
    display: flex;
    align-items: flex-start;
    height: 21px;
    overflow: hidden;
    background: linear-gradient(90deg, #6d6d62 0, #7c7766 300px, #9a8e70 400px, #8d8674 700px, #6f6c5f 1150px, #8a8674 1400px, #8b806b 1550px, #777262 1770px, #15140f 1790px, #15140f 1880px, #8a8670 1895px);
    border-top: 1px solid #222;
    color: #fff;
}
.start {
    width: 54px;
    padding: 0 7px;
    margin-right: 4px;
}
.task {
    width: 60px;
    height: 40px;
    display: flex;
    justify-content: center;
    padding-top: 3px;
    margin-right: 2px;
    border-radius: 3px;
}
.task.open {
    border: 1px solid #c9c6b8;
    background: #8c8a7e;
}
.task.current-task {
    background: #cfcdc4;
}
.tray {
    display: flex;
    align-items: flex-start;
    gap: 6px;
    margin-left: auto;
    padding-top: 13px;
}
.tray .lang {
    margin: -5px 12px 0 0;
}
.tray svg:nth-of-type(1) {
    margin-top: 4px;
}
.tray time {
    margin: -3px 0 0 12px;
    font-size: 15px;
    line-height: 20px;
}
.show-desktop {
    width: 14px;
    height: 40px;
    margin-left: 16px;
    border: 1px solid #ccc;
    background: #77745f;
}
```
